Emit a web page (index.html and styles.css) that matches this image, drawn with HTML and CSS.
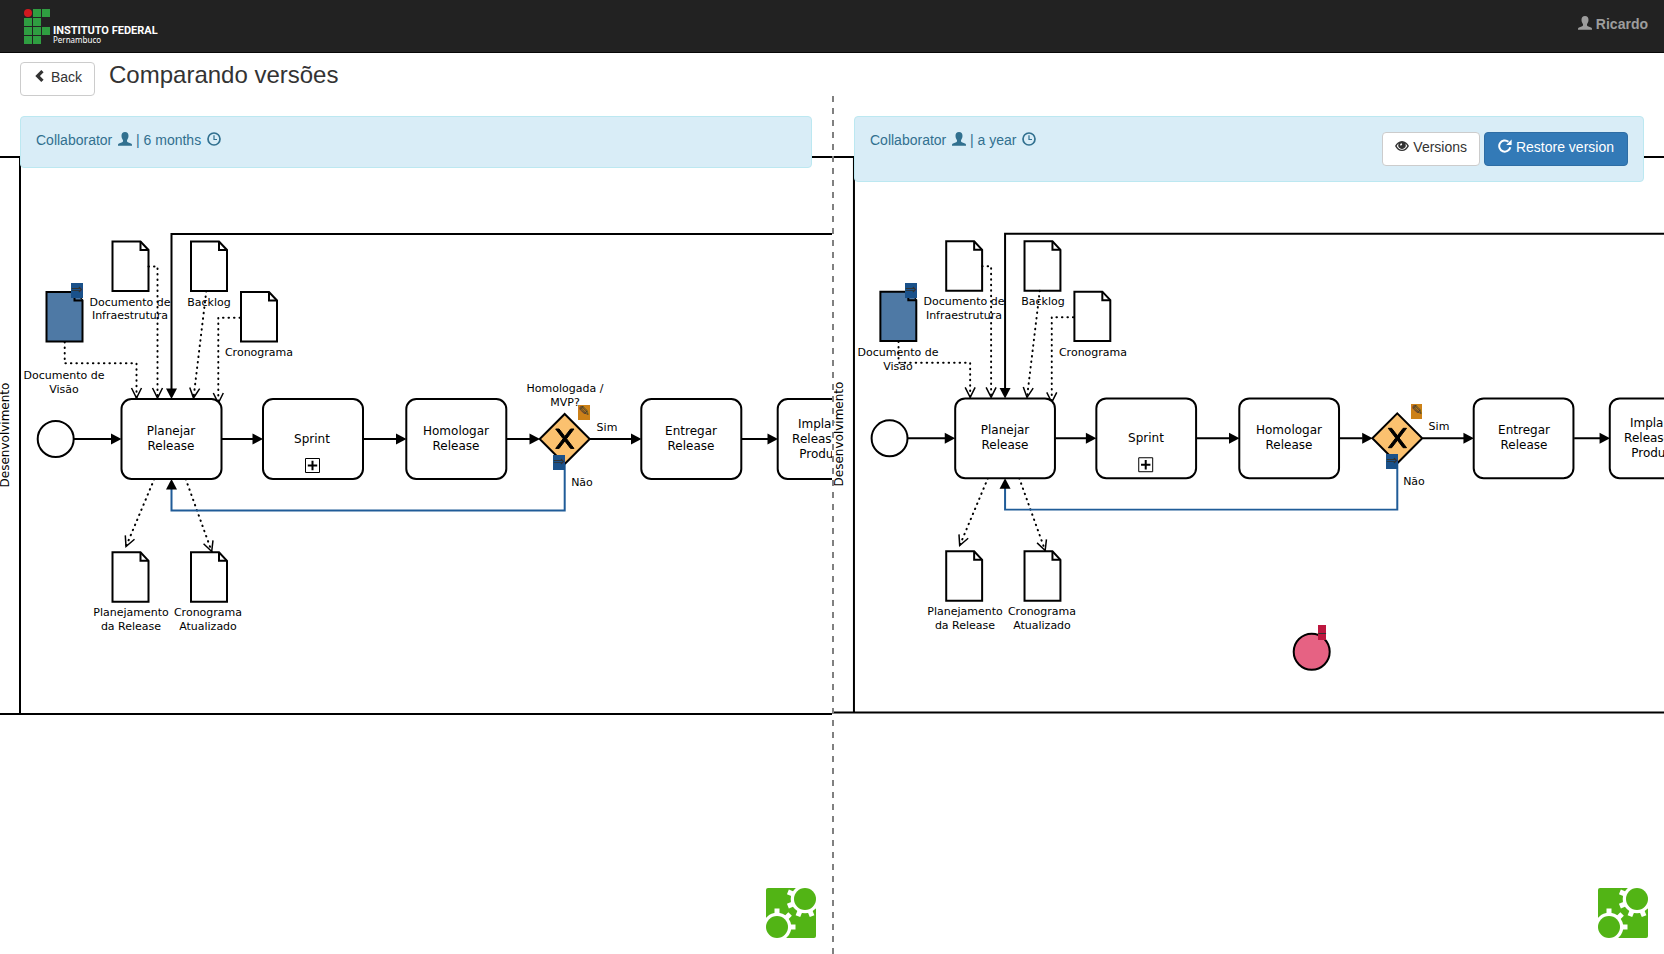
FILE: index.html
```html
<!DOCTYPE html>
<html lang="pt-BR">
<head>
<meta charset="utf-8">
<title>Comparando versões</title>
<meta name="viewport" content="width=device-width, initial-scale=1">
<link rel="stylesheet" href="styles.css">
</head>
<body>
<svg class="defs" width="0" height="0" aria-hidden="true">
  <defs>
    <symbol id="i-user" viewBox="0 0 14 14"><path d="M7 0C9.3 0 10.500 1.500 10.500 3.800C10.500 5.800 9.700 7.300 9 8.200V9.300C9 9.800 9.300 10 9.800 10.200L13 11.500C13.700 11.800 14 12.300 14 13V13.800H0V13C0 12.300.3 11.800 1 11.500L4.200 10.200C4.700 10 5 9.800 5 9.300V8.200C4.300 7.300 3.500 5.800 3.500 3.800C3.500 1.500 4.700 0 7 0Z" fill="currentColor"/></symbol>
    <symbol id="i-clock" viewBox="0 0 14 14"><circle cx="7" cy="7" r="6" fill="none" stroke="currentColor" stroke-width="1.700"/><path d="M7 3.200V7.500H10" fill="none" stroke="currentColor" stroke-width="1.200"/></symbol>
    <symbol id="i-left" viewBox="0 0 14 14"><path d="M8.300 1L10.600 3.300L6.900 7L10.600 10.700L8.300 13L2.300 7Z" fill="currentColor"/></symbol>
    <symbol id="i-eye" viewBox="0 0 14 14"><path fill-rule="evenodd" d="M0 7C1.500 4.200 4 2 7 2S12.500 4.200 14 7C12.500 10 10 12 7 12S1.500 10 0 7ZM1.700 7C2.900 9.300 4.800 10.700 7 10.700S11.100 9.300 12.300 7C11.800 5.900 11 5 10.200 4.400A3.700 3.700 0 1 1 3.800 4.400C3 5 2.200 5.900 1.700 7ZM6.700 4.200C5.700 4.200 5 5 5.100 6.200C5.800 6.600 6.800 6.300 7.200 5.500Z" fill="currentColor"/></symbol>
    <symbol id="i-repeat" viewBox="0 0 14 14"><path d="M12.300 8.200A5.600 5.600 0 1 1 10.400 2.700" fill="none" stroke="currentColor" stroke-width="2"/><path d="M13.600.4V6H8.200Z" fill="currentColor"/></symbol>

    <symbol id="bpmn-logo" viewBox="0 0 50 50">
      <rect width="50" height="50" rx="2" fill="#52b415"/>
      <g fill="#fff">
        <rect x="39" width="11" height="11"/><rect y="39" width="11" height="11"/>
        <circle cx="39" cy="11" r="14.300"/><circle cx="11" cy="39" r="14.300"/>
      </g>
      <g stroke="#fff" stroke-width="5" fill="none">
        <path d="M11 39V20.500M11 39H29.500M11 39L24.100 25.900"/>
        <path d="M39 11L21.900 3.900M39 11L21.900 18.100M39 11L31.900 28.100M39 11L46.100 28.100"/>
      </g>
      <g fill="#52b415"><circle cx="39" cy="11" r="11"/><circle cx="11" cy="39" r="11"/></g>
    </symbol>

    <g id="sheet"><path d="M0 0H28L36 8.500V49.500H0Z"/><path d="M28 0V8.500H36"/></g>
    <path id="head" class="head" d="M0 0L-10.500 -5.500V5.500Z"/>
    <path id="vee" class="vee" d="M-10 -5L0 0L-10 5"/>

    <g id="flow" class="shapes">
      <path d="M0 157H1300M0 714H1300M20 157V714"/>
      <path d="M900 234H171.500V390"/>
      <use href="#head" transform="translate(171.500 399) rotate(90)"/>
      <g class="dots">
        <path d="M64.700 342V363.300H136.500V398"/>
        <path d="M148.500 266.500H157.500V398"/>
        <path d="M206.300 291L193.500 398"/>
        <path d="M240 317.700H218.300V403"/>
        <path d="M154.300 479L126 546.500"/>
        <path d="M185.700 479L211.700 551.500"/>
      </g>
      <use href="#vee" transform="translate(136.500 398) rotate(90)"/>
      <use href="#vee" transform="translate(157.500 398) rotate(90)"/>
      <use href="#vee" transform="translate(193.500 398) rotate(97)"/>
      <use href="#vee" transform="translate(218.300 403) rotate(90)"/>
      <use href="#vee" transform="translate(126 546.500) rotate(113)"/>
      <use href="#vee" transform="translate(211.700 551.500) rotate(70)"/>
      <use href="#sheet" x="112.500" y="241.500"/>
      <use href="#sheet" x="191" y="241.500"/>
      <use href="#sheet" x="241" y="292"/>
      <use href="#sheet" class="moved" x="46.500" y="292"/>
      <use href="#sheet" x="112.500" y="552.300"/>
      <use href="#sheet" x="191" y="552.300"/>
      <path d="M74 439H112M222 439H253M363 439H397M507 439H530M590 439H632M742 439H768"/>
      <use href="#head" x="121.500" y="439"/>
      <use href="#head" x="263" y="439"/>
      <use href="#head" x="406.500" y="439"/>
      <use href="#head" x="540" y="439"/>
      <use href="#head" x="641.500" y="439"/>
      <use href="#head" x="778" y="439"/>
      <circle cx="55.700" cy="439" r="18"/>
      <rect x="121.500" y="399" width="100" height="80" rx="10"/>
      <rect x="263" y="399" width="100" height="80" rx="10"/>
      <rect x="406.300" y="399" width="100" height="80" rx="10"/>
      <rect x="641.300" y="399" width="100" height="80" rx="10"/>
      <rect x="777.700" y="399" width="100" height="80" rx="10"/>
      <path class="marker" d="M305.500 458.500H319.500V472.500H305.500Z"/><path d="M307.800 465.500H317.200M312.500 460.800V470.200"/>
      <path class="changed" d="M564.700 414L589.700 439L564.700 464L539.700 439Z"/>
      <path class="cross" d="M555.700 429l7.430 9.710-7.430 9.710 3.430 0 5.710-7.460 5.710 7.460 3.430 0-7.430-9.710 7.430-9.710-3.430 0-5.710 7.460-5.710-7.460-3.430 0z"/>
      <path class="rerouted" d="M564.700 464V510.500H171.500V488"/>
      <use href="#head" transform="translate(171.500 479) rotate(-90)"/>
    </g>
  </defs>
</svg>

<header class="navbar">
  <a class="brand" href="#" aria-label="Instituto Federal Pernambuco">
    <svg width="26" height="35" viewBox="0 0 26 35" aria-hidden="true">
      <circle cx="4" cy="4" r="4" fill="#d0191f"/>
      <path fill="#2f9e41" d="M9 0h8v8H9zM18 0h8v8h-8zM0 9h8v8H0zM9 9h8v8H9zM0 18h8v8H0zM9 18h8v8H9zM18 18h8v8h-8zM0 27h8v8H0zM9 27h8v8H9z"/>
    </svg>
    <span class="brand-text"><strong>INSTITUTO FEDERAL</strong><span>Pernambuco</span></span>
  </a>
  <a class="user" href="#"><svg class="icon"><use href="#i-user"/></svg> Ricardo</a>
</header>

<div class="titlebar">
  <button class="btn" type="button"><svg class="icon"><use href="#i-left"/></svg> Back</button>
  <h1>Comparando versões</h1>
</div>

<main class="compare">
  <section class="panel">
    <svg class="canvas" role="img" aria-label="Diagrama, 6 months">
      <g transform="translate(0 -96)">
        <use href="#flow"/>
        <g class="task">
          <text transform="translate(9 435) rotate(-90)">Desenvolvimento</text>
          <text x="171" y="435">Planejar</text><text x="171" y="450">Release</text>
          <text x="312" y="443">Sprint</text>
          <text x="456" y="435">Homologar</text><text x="456" y="450">Release</text>
          <text x="691" y="435">Entregar</text><text x="691" y="450">Release</text>
          <text x="827" y="428">Implantar</text><text x="827" y="443">Release em</text><text x="827" y="458">Produção</text>
        </g>
        <g class="label">
          <text x="130" y="306">Documento de</text><text x="130" y="319">Infraestrutura</text>
          <text x="209" y="306">Backlog</text>
          <text x="259" y="356">Cronograma</text>
          <text x="64" y="379">Documento de</text><text x="64" y="393">Visão</text>
          <text x="131" y="616">Planejamento</text><text x="131" y="630">da Release</text>
          <text x="208" y="616">Cronograma</text><text x="208" y="630">Atualizado</text>
          <text x="565" y="392">Homologada /</text><text x="565" y="406">MVP?</text>
          <text x="607" y="431">Sim</text><text x="582" y="486">Não</text>
        </g>
        <g class="badge">
          <rect class="blue" x="71" y="283" width="12" height="15"/><text x="77" y="294">⇒</text>
          <rect class="amber" x="578" y="405" width="12" height="15"/><text x="584" y="416">✎</text>
          <rect class="blue" x="553" y="455" width="12" height="15"/><text x="559" y="466">⇒</text>
        </g>
      </g>
    </svg>
    <div class="alert">
      <p>Collaborator <svg class="icon"><use href="#i-user"/></svg> | 6 months <svg class="icon"><use href="#i-clock"/></svg></p>
    </div>
    <a class="logo" href="#" aria-label="bpmn.io"><svg><use href="#bpmn-logo"/></svg></a>
  </section>

  <section class="panel">
    <svg class="canvas" role="img" aria-label="Diagrama, a year">
      <g transform="translate(0 -96)">
        <use href="#flow" transform="translate(0 .4) scale(.9975)"/>
        <circle class="removed" cx="477.700" cy="651.700" r="18"/>
        <g class="task">
          <text transform="translate(9 434) rotate(-90)">Desenvolvimento</text>
          <text x="171" y="434">Planejar</text><text x="171" y="449">Release</text>
          <text x="312" y="442">Sprint</text>
          <text x="455" y="434">Homologar</text><text x="455" y="449">Release</text>
          <text x="690" y="434">Entregar</text><text x="690" y="449">Release</text>
          <text x="825" y="427">Implantar</text><text x="825" y="442">Release em</text><text x="825" y="457">Produção</text>
        </g>
        <g class="label">
          <text x="130" y="305">Documento de</text><text x="130" y="319">Infraestrutura</text>
          <text x="209" y="305">Backlog</text>
          <text x="259" y="356">Cronograma</text>
          <text x="64" y="356">Documento de</text><text x="64" y="370">Visão</text>
          <text x="131" y="615">Planejamento</text><text x="131" y="629">da Release</text>
          <text x="208" y="615">Cronograma</text><text x="208" y="629">Atualizado</text>
          <text x="605" y="430">Sim</text><text x="580" y="485">Não</text>
        </g>
        <g class="badge">
          <rect class="blue" x="71" y="283" width="12" height="15"/><text x="77" y="294">⇒</text>
          <rect class="amber" x="577" y="404" width="11" height="15"/><text x="583" y="415">✎</text>
          <rect class="blue" x="552" y="454" width="12" height="15"/><text x="558" y="465">⇒</text>
          <rect class="red" x="484" y="625" width="8" height="15"/><text x="488" y="637">–</text>
        </g>
      </g>
    </svg>
    <div class="alert">
      <p>Collaborator <svg class="icon"><use href="#i-user"/></svg> | a year <svg class="icon"><use href="#i-clock"/></svg></p>
      <div class="actions">
        <button class="btn" type="button"><svg class="icon"><use href="#i-eye"/></svg> Versions</button>
        <button class="btn btn-primary" type="button"><svg class="icon"><use href="#i-repeat"/></svg> Restore version</button>
      </div>
    </div>
    <a class="logo" href="#" aria-label="bpmn.io"><svg><use href="#bpmn-logo"/></svg></a>
  </section>
</main>
</body>
</html>
```
FILE: styles.css
```css
* { box-sizing: border-box; }

body {
  margin: 0;
  min-height: 100vh;
  display: flex;
  flex-direction: column;
  background: #fff;
  color: #333;
  font: 14px/20px "Liberation Sans", Arial, sans-serif;
}

.defs { position: absolute; }
.icon { width: 14px; height: 14px; vertical-align: -1px; }

.navbar {
  display: flex;
  justify-content: space-between;
  align-items: flex-start;
  padding: 9px 16px 8px 24px;
  background: #222;
  border-bottom: 1px solid #080808;
}
.brand { display: flex; align-items: flex-end; gap: 3px; color: #fff; text-decoration: none; }
.brand svg { display: block; }
.brand-text { display: flex; flex-direction: column; font: 8px/8px "Noto Sans", sans-serif; }
.brand-text strong { font: 700 11px/11px Roboto, sans-serif; }
.user { padding-top: 5px; color: #9d9d9d; font-weight: 700; text-decoration: none; }

.titlebar { display: flex; align-items: flex-start; gap: 14px; padding: 9px 20px 0; }
h1 { margin: 0; font-size: 24px; line-height: 26px; font-weight: 400; }

.btn {
  height: 34px;
  padding: 4px 12px 8px;
  border: 1px solid #ccc;
  border-radius: 4px;
  background: #fff;
  color: #333;
  font: inherit;
  white-space: nowrap;
}
.btn-primary { padding-inline: 13px; background: #337ab7; border-color: #2e6da4; color: #fff; }

.compare { flex: 1; display: grid; grid-template-columns: 1fr 1fr; }
.panel { position: relative; min-width: 0; padding: 20px; overflow: hidden; }
.panel + .panel {
  border-left: 2px solid transparent;
  background: repeating-linear-gradient(#808080 0 6px, transparent 6px 12px) left top / 2px 100% no-repeat border-box;
}
.canvas { position: absolute; inset: 0; width: 100%; height: 100%; }

.alert {
  position: relative;
  display: flex;
  justify-content: space-between;
  align-items: flex-start;
  padding: 15px;
  border: 1px solid #bce8f1;
  border-radius: 4px;
  background: #d9edf7;
  color: #31708f;
}
.alert p { margin: 0; min-height: 20px; line-height: 16px; }
.alert p .icon { margin-left: 2px; }
.actions { display: flex; gap: 4px; }

.logo { position: absolute; right: 16px; bottom: 16px; width: 50px; height: 50px; }
.logo svg { display: block; width: 50px; height: 50px; }

.shapes { fill: none; stroke: #000; stroke-width: 2; }
.shapes rect, .shapes circle { fill: #fff; }
.head { fill: #000; stroke: none; }
.vee { stroke-width: 1.5; }
.shapes .dots { stroke-linecap: round; stroke-dasharray: .5 5; }
.shapes .moved { fill: #4e79a5; }
.shapes .marker { stroke-width: 1; }
.shapes .changed { fill: #fbc16f; }
.shapes .cross { fill: #000; stroke-width: 1; }
.shapes .rerouted { stroke: #205c98; }
.removed { fill: #e66283; stroke: #000; stroke-width: 2; }

.task, .label { fill: #000; text-anchor: middle; font-family: "DejaVu Sans", sans-serif; }
.task { font-size: 12px; }
.label { font-size: 11px; }
.badge { fill: #333; text-anchor: middle; font: 14px "Liberation Sans", "DejaVu Sans", sans-serif; }
.badge .blue { fill: #1a518a; }
.badge .amber { fill: #cc8118; }
.badge .red { fill: #bd173f; }
```
